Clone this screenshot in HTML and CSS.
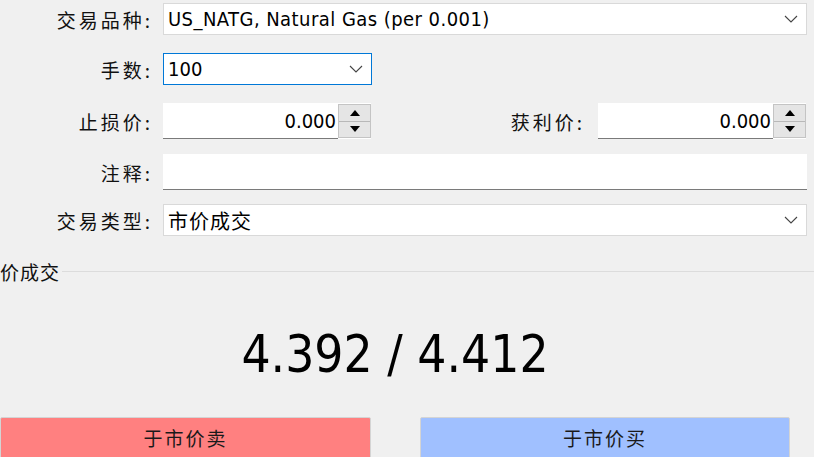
FILE: index.html
```html
<!DOCTYPE html>
<html lang="zh">
<head>
<meta charset="utf-8">
<title>下单</title>
<link rel="stylesheet" href="styles.css">
</head>
<body>
<div class="form">
  <div class="row r1">
    <div class="label">交易品种:</div>
    <div class="combo">
      <span class="combo-text wide">US_NATG, Natural Gas (per 0.001)</span>
      <svg class="chev" width="14" height="8" viewBox="0 0 14 8"><path d="M1 1 L7 7 L13 1" fill="none" stroke="#444" stroke-width="1.1"/></svg>
    </div>
  </div>
  <div class="row r2">
    <div class="label">手数:</div>
    <div class="combo combo-focus">
      <span class="combo-text">100</span>
      <svg class="chev" width="14" height="8" viewBox="0 0 14 8"><path d="M1 1 L7 7 L13 1" fill="none" stroke="#444" stroke-width="1.1"/></svg>
    </div>
  </div>
  <div class="row-split r3">
    <div class="label">止损价:</div>
    <div class="spin">
      <span class="spin-value">0.000</span>
      <div class="spin-btns">
        <div class="spin-btn"><svg width="10" height="6" viewBox="0 0 10 6"><path d="M5 0 L10 6 L0 6 Z" fill="#000"/></svg></div>
        <div class="spin-btn"><svg width="10" height="6" viewBox="0 0 10 6"><path d="M0 0 L10 0 L5 6 Z" fill="#000"/></svg></div>
      </div>
    </div>
    <div class="label label2">获利价:</div>
    <div class="spin">
      <span class="spin-value">0.000</span>
      <div class="spin-btns">
        <div class="spin-btn"><svg width="10" height="6" viewBox="0 0 10 6"><path d="M5 0 L10 6 L0 6 Z" fill="#000"/></svg></div>
        <div class="spin-btn"><svg width="10" height="6" viewBox="0 0 10 6"><path d="M0 0 L10 0 L5 6 Z" fill="#000"/></svg></div>
      </div>
    </div>
  </div>
  <div class="row r4">
    <div class="label">注释:</div>
    <div class="text-input"></div>
  </div>
  <div class="row r5">
    <div class="label">交易类型:</div>
    <div class="combo">
      <span class="combo-text cjk">市价成交</span>
      <svg class="chev" width="14" height="8" viewBox="0 0 14 8"><path d="M1 1 L7 7 L13 1" fill="none" stroke="#444" stroke-width="1.1"/></svg>
    </div>
  </div>
</div>

<div class="group">
  <div class="group-title">
    <span class="group-text">价成交</span>
    <span class="group-line"></span>
  </div>
  <div class="price">4.392 / 4.412</div>
  <div class="actions">
    <div class="btn btn-sell">于市价卖</div>
    <div class="btn btn-buy">于市价买</div>
  </div>
</div>
</body>
</html>
```

FILE: styles.css
```css
html, body {
  margin: 0;
  padding: 0;
}

body {
  width: 814px;
  height: 457px;
  overflow: hidden;
  background: #f0f0f0;
  color: #000;
  font-family: "DejaVu Sans Condensed", "DejaVu Sans", "Noto Sans CJK SC", sans-serif;
  font-stretch: condensed;
}

.form {
  padding-top: 3px;
  padding-right: 7px;
}

.row {
  display: grid;
  grid-template-columns: 163px 1fr;
  align-items: center;
}

.row-split {
  display: grid;
  grid-template-columns: 163px 208px 1fr 208px;
  align-items: center;
  padding-right: 1px;
}

.r1 { height: 32px; }
.r2 { height: 32px; margin-top: 18px; grid-template-columns: 163px 209px; }
.r3 { height: 36px; margin-top: 18px; }
.r4 { height: 36px; margin-top: 15px; }
.r5 { height: 32px; margin-top: 14px; }

.label {
  font-family: "Noto Sans CJK SC", sans-serif;
  font-size: 19px;
  letter-spacing: 3px;
  text-align: right;
  padding-right: 10px;
  color: #111;
}

.cjk {
  font-family: "Noto Sans CJK SC", sans-serif;
  font-size: 19px;
  letter-spacing: 1px;
}

.combo {
  box-sizing: border-box;
  height: 100%;
  background: #fff;
  border: 1px solid #d9d9d9;
  display: flex;
  align-items: center;
  justify-content: space-between;
  padding: 0 8px 0 4px;
}

.combo-focus {
  border-color: #0078d7;
}

.combo-text {
  font-size: 20px;
  white-space: nowrap;
}

.wide {
  letter-spacing: 0.45px;
}

.chev {
  display: block;
}

.spin {
  box-sizing: border-box;
  height: 100%;
  display: flex;
  align-items: stretch;
  background: #fff;
}

.spin-value {
  flex: 1;
  font-size: 20px;
  padding-right: 2px;
  border-bottom: 1px solid #7a7a7a;
  display: flex;
  align-items: center;
  justify-content: flex-end;
}

.spin-btns {
  width: 33px;
  display: flex;
  flex-direction: column;
  background: #e5e5e5;
  border: 1px solid #c4c4c4;
  box-sizing: border-box;
  margin: 1px 0;
}

.spin-btn {
  flex: 1;
  display: flex;
  align-items: center;
  justify-content: center;
}

.spin-btn + .spin-btn {
  border-top: 1px solid #b8b8b8;
}

.label2 {
  padding-right: 13px;
}

.text-input {
  box-sizing: border-box;
  height: 100%;
  background: #fff;
  border-bottom: 1px solid #7a7a7a;
}

.group {
  width: 790px;
}

.group-title {
  margin-top: 23px;
  display: flex;
  align-items: center;
  height: 24px;
}

.group-text {
  font-family: "Noto Sans CJK SC", sans-serif;
  font-size: 19px;
  letter-spacing: 1px;
  color: #111;
  padding-right: 2px;
}

.group-line {
  flex: 1;
  border-top: 1px solid #dcdcdc;
  margin-right: -24px;
}

.price {
  margin-top: 42px;
  height: 60px;
  line-height: 60px;
  text-align: center;
  font-size: 51px;
}

.actions {
  margin-top: 32px;
  display: flex;
  justify-content: space-between;
}

.btn {
  box-sizing: border-box;
  width: 371px;
  height: 42px;
  border: 1px solid #d4d4d4;
  border-radius: 2px;
  display: flex;
  align-items: center;
  justify-content: center;
  font-family: "Noto Sans CJK SC", sans-serif;
  font-size: 19px;
  letter-spacing: 2px;
  color: #1a1a1a;
  padding-bottom: 2px;
}

.btn-sell {
  background: #ff8080;
}

.btn-buy {
  width: 370px;
  background: #a0c0ff;
}
```
